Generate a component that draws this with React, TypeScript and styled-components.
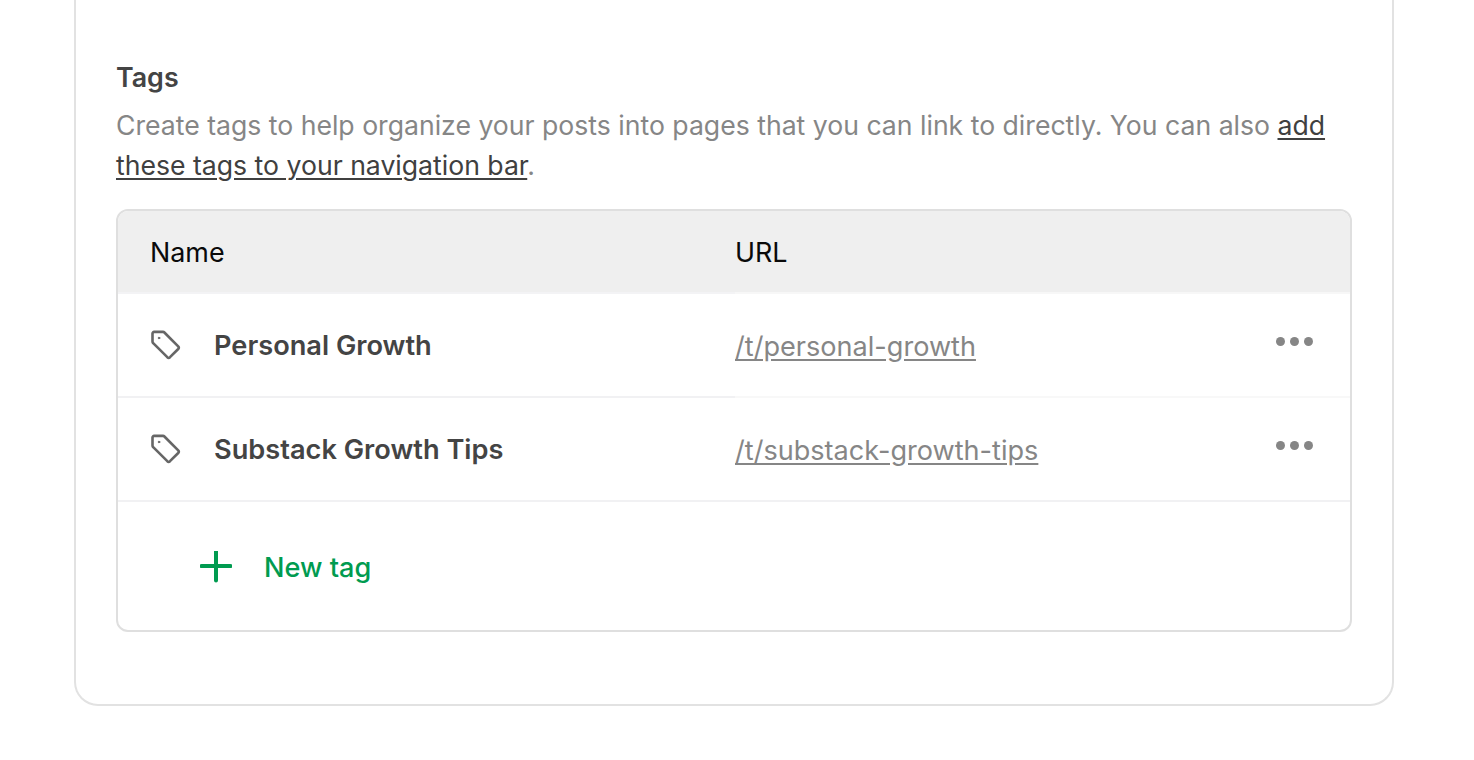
import React from "react";
import styled, { createGlobalStyle } from "styled-components";

const Global = createGlobalStyle`
  html, body { margin: 0; padding: 0; background: #fff; overflow: hidden; }
  body { font-family: Inter, "Liberation Sans", sans-serif; -webkit-font-smoothing: antialiased; }
`;

const Page = styled.div`
  width: 1474px;
  height: 760px;
  padding: 0 80px 0 74px;
  box-sizing: border-box;
`;

const Card = styled.section`
  box-sizing: border-box;
  width: 1320px;
  height: 706px;
  padding: 60px 40px 0;
  border: 2px solid #e2e2e2;
  border-top: none;
  border-radius: 0 0 24px 24px;
`;

const Title = styled.h2`
  margin: 0;
  height: 34px;
  font-size: 26.8px;
  line-height: 34px;
  font-weight: 560;
  color: #444444;
`;

const Description = styled.p`
  margin: 0 0 24px;
  width: 1236px;
  font-size: 26.61px;
  line-height: 40px;
  font-weight: 400;
  color: #868686;
  padding-top: 11px;
`;

const InlineLink = styled.a`
  color: #404040;
  text-decoration: underline;
  text-underline-offset: 3px;
`;

const Table = styled.div`
  box-sizing: border-box;
  width: 1236px;
  height: 423px;
  border: 2px solid #dfdfdf;
  border-radius: 12px;
  overflow: hidden;
`;

const HeaderRow = styled.div`
  display: grid;
  grid-template-columns: 617px 1fr;
  height: 83px;
  background: #efefef;
  font-size: 26.9px;
  color: #0a0a0a;
`;

const HeaderCell = styled.div<{ $inset: number; $line: string }>`
  display: flex;
  align-items: center;
  box-sizing: border-box;
  padding-left: ${(p) => p.$inset}px;
  border-bottom: 2px solid ${(p) => p.$line};
  line-height: 32px;
`;

const Row = styled.div`
  display: grid;
  grid-template-columns: 617px 1fr 80px;
  height: 104px;
`;

const NameCell = styled.div`
  display: flex;
  align-items: center;
  box-sizing: border-box;
  padding-left: 32px;
  gap: 32px;
  font-size: 27.2px;
  font-weight: 560;
  color: #444444;
  border-bottom: 2px solid #f1f1f3;
`;

const UrlCell = styled.div<{ $line: string }>`
  display: flex;
  align-items: center;
  box-sizing: border-box;
  padding-top: 3px;
  border-bottom: 2px solid ${(p) => p.$line};
`;

const UrlLink = styled.a`
  font-size: 27.1px;
  color: #868686;
  text-decoration: underline;
  text-underline-offset: 3px;
`;

const MoreCell = styled.div<{ $line: string }>`
  display: flex;
  align-items: center;
  box-sizing: border-box;
  gap: 5px;
  padding: 0 0 7px 6px;
  border-bottom: 2px solid ${(p) => p.$line};
`;

const Dot = styled.span`
  width: 9px;
  height: 9px;
  border-radius: 50%;
  background: #868686;
`;

const NewTag = styled.div`
  display: flex;
  align-items: center;
  gap: 32px;
  height: 130px;
  padding-left: 82px;
  font-size: 27.1px;
  font-weight: 500;
  color: #009b50;
`;

const TagIcon = () => (
  <svg width="32" height="32" viewBox="0 1 32 32" fill="none" stroke="#666666" strokeWidth="2.6" strokeLinejoin="round" strokeLinecap="round">
    <path d="M2.5 5.5 A1.6 1.6 0 0 1 4.1 3.9 L13 3.9 A2 2 0 0 1 14.4 4.5 L28.2 18.3 A2 2 0 0 1 28.2 21 L20 29.2 A2 2 0 0 1 17.3 29.2 L3.2 15.2 A2.2 2.2 0 0 1 2.5 13.6 Z" />
    <circle cx="9" cy="10" r="0.8" fill="#666666" strokeWidth="1" />
  </svg>
);

const PlusIcon = () => (
  <svg width="32" height="32" viewBox="0 1 32 32" fill="none" stroke="#009b50" strokeWidth="4" strokeLinecap="round">
    <path d="M16 1.5 V30.5 M1.5 16 H30.5" />
  </svg>
);

const tags = [
  { name: "Personal Growth", url: "/t/personal-growth", line: "#f8f8f8" },
  { name: "Substack Growth Tips", url: "/t/substack-growth-tips", line: "#f1f1f3" },
];

export default function App() {
  return (
    <Page>
      <Global />
      <Card>
        <Title>Tags</Title>
        <Description>
          Create tags to help organize your posts into pages that you can link to directly. You can also{" "}
          <InlineLink href="#">add these tags to your navigation bar</InlineLink>.
        </Description>
        <Table>
          <HeaderRow>
            <HeaderCell $inset={32} $line="#f3f3f5">Name</HeaderCell>
            <HeaderCell $inset={0} $line="#f7f7f7">URL</HeaderCell>
          </HeaderRow>
          {tags.map((t) => (
            <Row key={t.url}>
              <NameCell>
                <TagIcon />
                {t.name}
              </NameCell>
              <UrlCell $line={t.line}>
                <UrlLink href="#">{t.url}</UrlLink>
              </UrlCell>
              <MoreCell $line={t.line}>
                <Dot />
                <Dot />
                <Dot />
              </MoreCell>
            </Row>
          ))}
          <NewTag>
            <PlusIcon />
            New tag
          </NewTag>
        </Table>
      </Card>
    </Page>
  );
}
